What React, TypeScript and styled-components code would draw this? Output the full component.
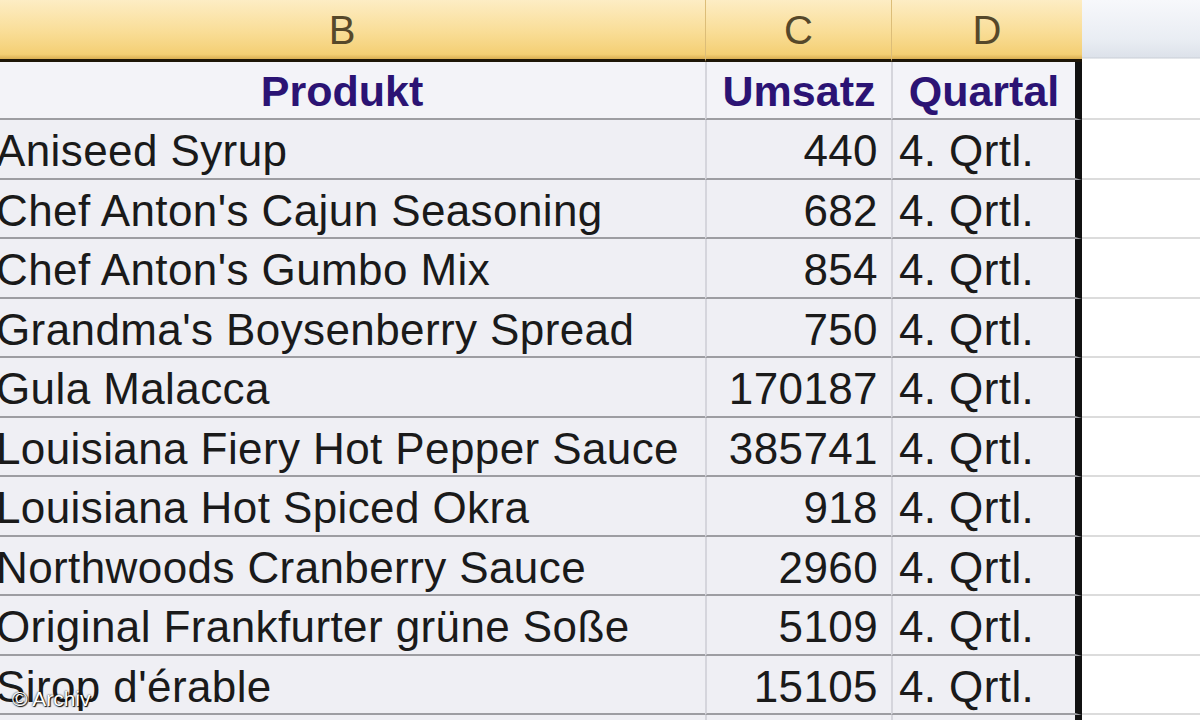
import React from 'react'
import styled, { createGlobalStyle } from 'styled-components'

const data: [string, number][] = [
  ['Aniseed Syrup', 440],
  ["Chef Anton's Cajun Seasoning", 682],
  ["Chef Anton's Gumbo Mix", 854],
  ["Grandma's Boysenberry Spread", 750],
  ['Gula Malacca', 170187],
  ['Louisiana Fiery Hot Pepper Sauce', 385741],
  ['Louisiana Hot Spiced Okra', 918],
  ['Northwoods Cranberry Sauce', 2960],
  ['Original Frankfurter grüne Soße', 5109],
  ["Sirop d'érable", 15105],
  ['', 0],
]

const GlobalStyle = createGlobalStyle`
  html, body {
    margin: 0;
    padding: 0;
    background: #fff;
    overflow: hidden;
  }
`

const Sheet = styled.div`
  position: relative;
  width: 1200px;
  height: 720px;
  overflow: hidden;
  font-family: "Liberation Sans", Arial, sans-serif;
`

const Grid = styled.div`
  display: grid;
  grid-template-columns: 726px 186px 191px 1fr;
  grid-template-rows: 62px 58px repeat(11, 59.5px);
  margin-left: -21px;
`

const ColLetter = styled.div<{ $sep?: boolean }>`
  box-sizing: border-box;
  display: flex;
  align-items: center;
  justify-content: center;
  padding-top: 2px;
  background: linear-gradient(to bottom, #fdedc4 0%, #f9dd96 55%, #f4cf74 92%, #d9ae52 100%);
  border-bottom: 3px solid #1e1608;
  border-left: ${p => (p.$sep ? '1px solid #dcbd78' : 'none')};
  color: #56482a;
  font-size: 40px;
`

const CornerE = styled.div`
  background: linear-gradient(to bottom, #f7f8fb 0, #e9edf3 40px, #dde2ea 57px, #c9ced6 58px, #ffffff 59px);
`

const Cell = styled.div<{ $align?: 'left' | 'right' | 'center'; $sep?: boolean; $last?: boolean }>`
  box-sizing: border-box;
  display: flex;
  align-items: center;
  justify-content: ${p => (p.$align === 'right' ? 'flex-end' : p.$align === 'center' ? 'center' : 'flex-start')};
  padding: 5px ${p => (p.$align === 'right' ? '13px' : '0')} 0 ${p => (p.$align === 'left' ? (p.$sep ? '6px' : '17px') : '0')};
  background: #efeff4;
  border-bottom: 2px solid #9d9da2;
  border-left: ${p => (p.$sep ? '2px solid #d5d5dc' : 'none')};
  border-right: ${p => (p.$last ? '7px solid #111' : 'none')};
  color: #1a1a1a;
  font-size: 44px;
  letter-spacing: 0.4px;
  white-space: nowrap;
  overflow: hidden;
`

const HeadCell = styled(Cell)`
  padding-top: 2px;
  background: #f3f3f8;
  color: #2b1374;
  font-weight: bold;
  font-size: 43px;
  letter-spacing: 0;
`

const EmptyCell = styled.div`
  background: #fff;
  border-bottom: 2px solid #dcdcdc;
  box-sizing: border-box;
`

const Watermark = styled.div`
  position: absolute;
  left: 12px;
  bottom: 9px;
  color: #fff;
  font-size: 21px;
  text-shadow: 0 0 2px #000, 1px 1px 1px #000;
`

export default function App() {
  return (
    <Sheet>
      <GlobalStyle />
      <Grid>
        <ColLetter>B</ColLetter>
        <ColLetter $sep>C</ColLetter>
        <ColLetter $sep>D</ColLetter>
        <CornerE />

        <HeadCell $align="center">Produkt</HeadCell>
        <HeadCell $align="center" $sep>Umsatz</HeadCell>
        <HeadCell $align="center" $sep $last>Quartal</HeadCell>
        <EmptyCell />

        {data.map(([name, sum], i) => (
          <React.Fragment key={i}>
            <Cell $align="left">{name}</Cell>
            <Cell $align="right" $sep>{name ? sum : ''}</Cell>
            <Cell $align="left" $sep $last>{name ? '4. Qrtl.' : ''}</Cell>
            <EmptyCell />
          </React.Fragment>
        ))}
      </Grid>
      <Watermark>© Archiv</Watermark>
    </Sheet>
  )
}
